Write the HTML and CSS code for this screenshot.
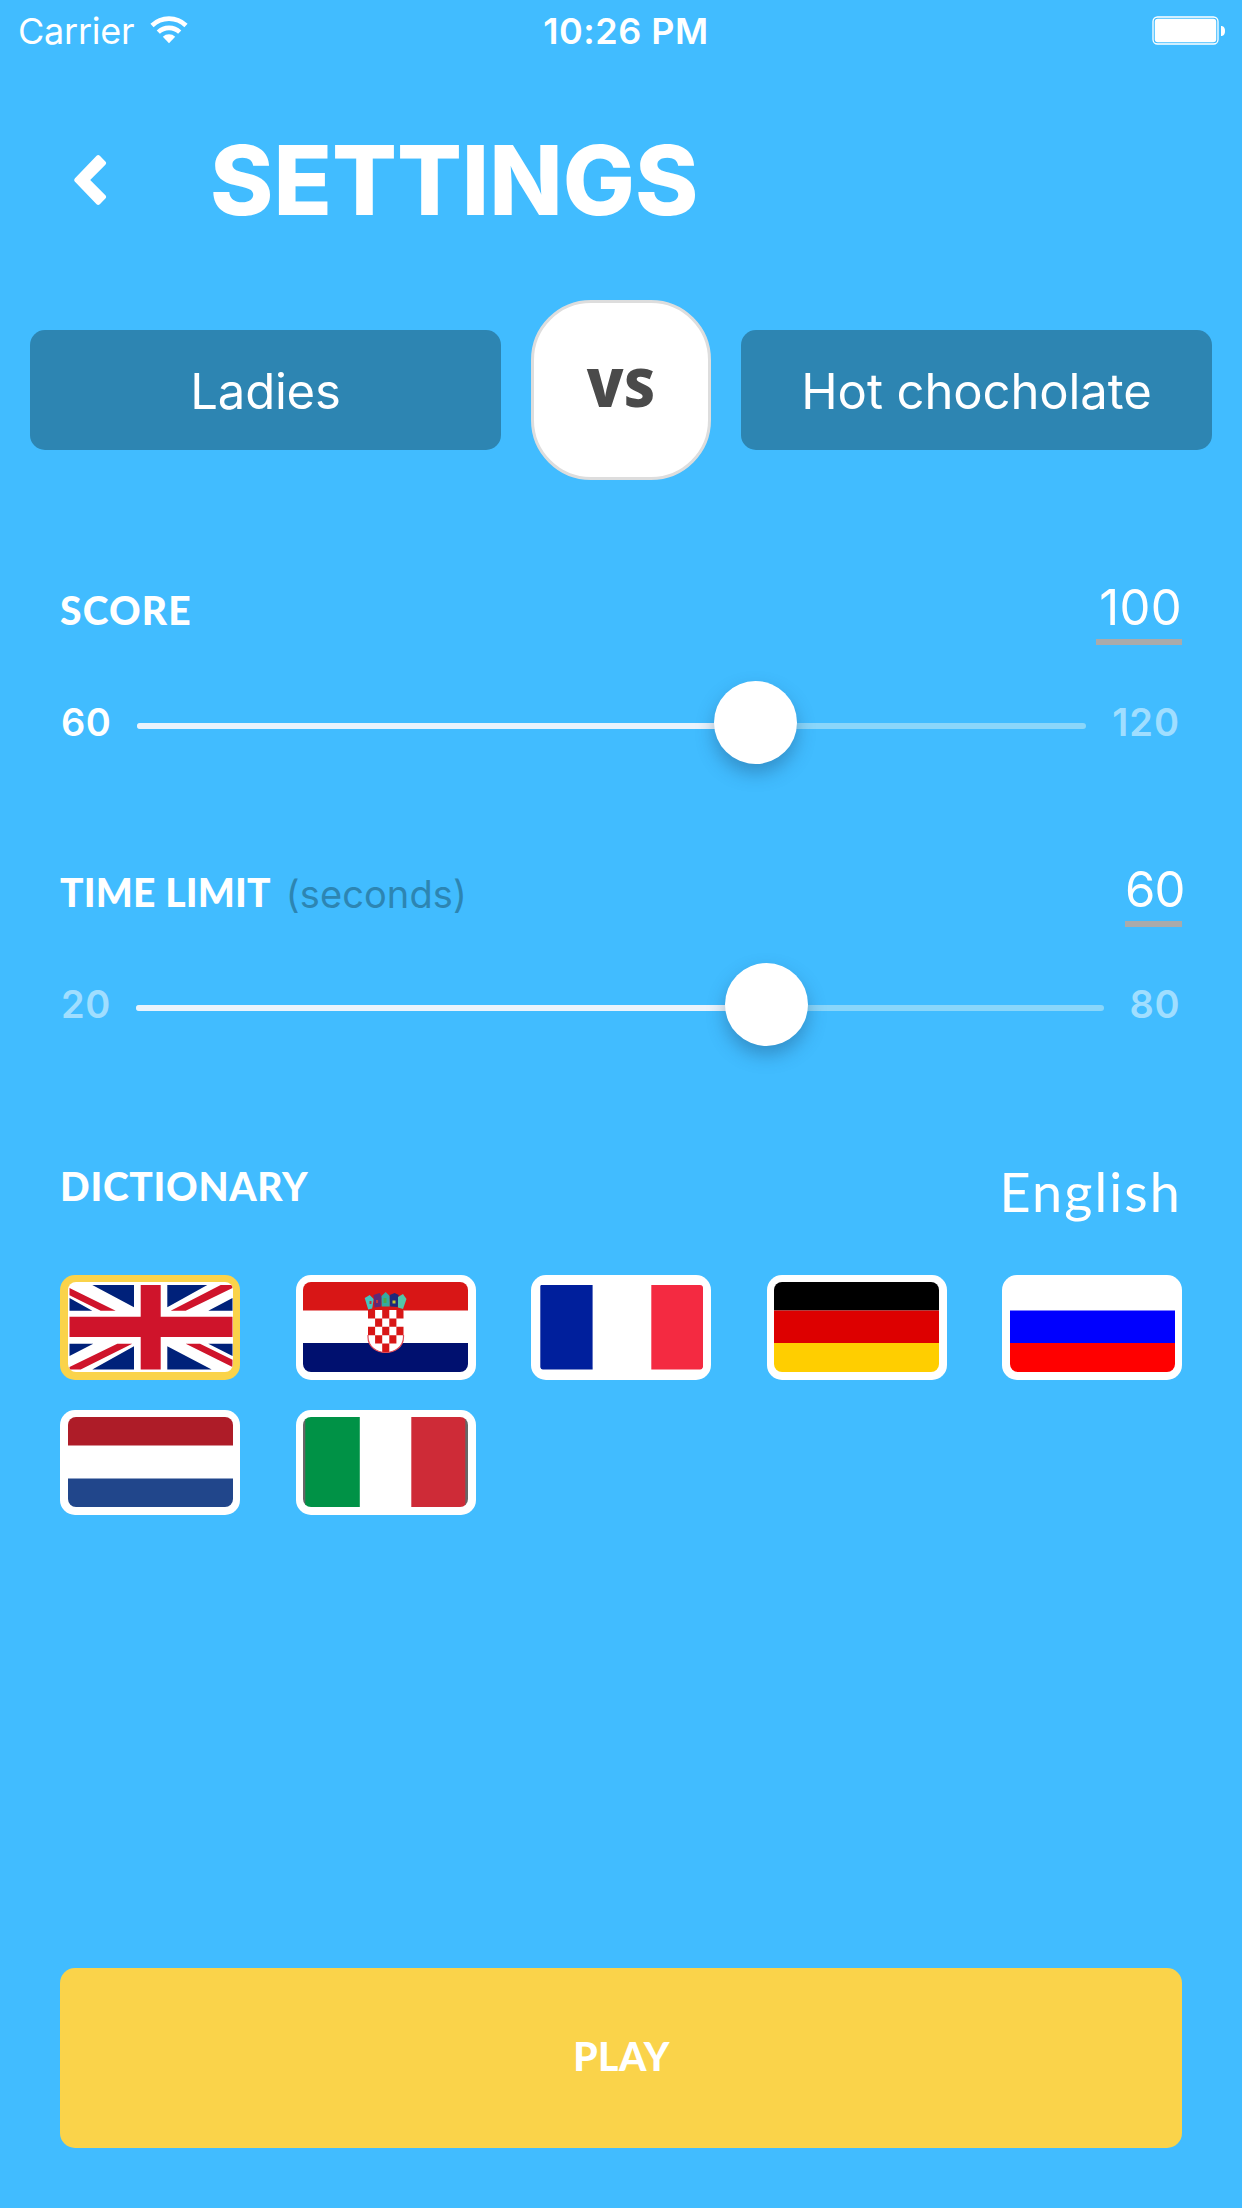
FILE: index.html
```html
<!DOCTYPE html>
<html lang="en">
<head>
<meta charset="utf-8">
<title>Settings</title>
<link rel="stylesheet" href="styles.css">
</head>
<body>
<main class="screen">
  <div class="status">
    <div class="status-left">
      <span class="carrier">Carrier</span>
      <svg class="wifi" width="38" height="28" viewBox="0 0 38 28">
        <path fill="none" stroke="#fff" stroke-width="4.600" d="M2 9.500a24.500 24.500 0 0 1 34 0M8.300 16.200a15.400 15.400 0 0 1 21.400 0"/>
        <path fill="#fff" d="M19 27.200l-6.200-6.400a9 9 0 0 1 12.400 0z"/>
      </svg>
    </div>
    <span class="clock">10:26 PM</span>
    <svg class="battery" width="75" height="30" viewBox="0 0 75 30">
      <rect x="1" y="1" width="65" height="27" rx="4.500" fill="none" stroke="#fff" stroke-width="1.300"/>
      <rect x="2.800" y="2.800" width="61.400" height="23.400" rx="3" fill="#fff"/>
      <path fill="#fff" d="M69 10c3 0 4 2.200 4 5s-1 5-4 5z"/>
    </svg>
  </div>

  <header class="header">
    <svg class="back" width="34" height="52" viewBox="0 0 34 52">
      <path fill="#fff" d="M22.600 1.700q1.600-1.600 3.200 0l5.600 5.800q1.500 1.600 0 3.200L16.200 26l15.200 15.300q1.500 1.600 0 3.200l-5.600 5.800q-1.600 1.600-3.200 0L1 27.800q-1.600-1.800 0-3.600z"/>
    </svg>
    <h1 class="title">SETTINGS</h1>
  </header>

  <section class="versus">
    <div class="team">Ladies</div>
    <div class="vs">VS</div>
    <div class="team team-b">Hot chocholate</div>
  </section>

  <section class="setting">
    <div class="setting-head">
      <h2 class="label label-score">SCORE</h2>
      <span class="value value-score">100</span>
    </div>
    <div class="slider slider-score">
      <span class="bound">60</span>
      <div class="track"><div class="fill" style="width: 65.2%"></div><div class="thumb" style="left: 65.2%"></div></div>
      <span class="bound bound-end dim bound-wide">120</span>
    </div>
  </section>

  <section class="setting">
    <div class="setting-head">
      <div class="label-group">
        <h2 class="label label-time">TIME LIMIT</h2>
        <span class="unit">(seconds)</span>
      </div>
      <span class="value value-time">60</span>
    </div>
    <div class="slider slider-time">
      <span class="bound dim">20</span>
      <div class="track"><div class="fill" style="width: 65.1%"></div><div class="thumb" style="left: 65.1%"></div></div>
      <span class="bound bound-end dim">80</span>
    </div>
  </section>

  <section class="dictionary">
    <div class="dictionary-head">
      <h2 class="label label-dictionary">DICTIONARY</h2>
      <span class="language">English</span>
    </div>
    <div class="flags">
      <div class="flag selected">
        <svg class="soft" viewBox="0 0 165 90">
          <path fill="#00217a" d="M24.300 3H66v22.300zM1.500 16l22.800 12.700H1.500zM99.300 3h40l-40 22.300zM164.500 16v12.700h-24.200zM66 64.300v23.200H24.300zM1.500 61.700h23.800L1.500 74zM99.300 64.300l44.400 23.200H99.300zM140.300 61.700h24.200V74z"/>
          <path fill="#cf142b" d="M1.500 6l46.200 22.700h-15L1.500 13.300zM152.700 3h11.800v3l-46.800 22.700h-15zM49.300 61.700h15L12.700 87.500H1.500V85zM117.700 61.700H132l32.500 16V85z"/>
          <path fill="#cf142b" d="M72.700 3h20v31.700h71.800V55H92.700v32.500h-20V55H1.500V34.700h71.200z"/>
        </svg>
      </div>
      <div class="flag">
        <svg viewBox="0 0 165 90">
          <path fill="#d81616" d="M0 0h165v28.600H0z"/>
          <path fill="#00106f" d="M0 61h165v29H0z"/>
          <g class="soft">
            <path fill="#fff" d="M65 28h35.500v27c0 10-9 15.500-17.700 15.500S65 65 65 55z"/>
            <path fill="#d81616" d="M65 28h7.100v8.400H65zM79.200 28h7.100v8.400h-7.100zM93.400 28h7.100v8.400h-7.100zM72.100 36.400h7.100v8.400h-7.100zM86.300 36.400h7.100v8.400h-7.100zM65 44.800h7.100v8.400H65zM79.200 44.800h7.100v8.400h-7.100zM93.400 44.800h7.100v8.400h-7.100zM72.100 53.200h7.100v8.400h-7.100zM86.300 53.200h7.100v8.400h-7.100zM79.200 61.600h7.100v8.900h-7.100z"/>
            <path fill="none" stroke="#e04a58" stroke-width="1.200" d="M65 53v2c0 10 9 15.500 17.700 15.500S100.500 65 100.500 55v-2"/>
            <path fill="#45c5bf" d="M61.700 16l5-3 4 4-1.500 9.500-4 1z"/>
            <path fill="#5d2a78" d="M70.500 13l6-2 2.500 4-1 9.500-6.500 1z"/>
            <path fill="#34a9a0" d="M78.500 14l4.200-4 4 4v10.500h-8z"/>
            <path fill="#1c2a7c" d="M86.700 13l5-2 4 2-1 12-7.500-.5z"/>
            <path fill="#54c6a8" d="M95 15l5-3 3.500 5-3.500 10-5-1.500z"/>
            <path fill="#c2363e" d="M66.500 19h2v3h-2zM73 18h2v3h-2z"/>
            <path fill="#49a84f" d="M80.500 16h3v5h-3z"/>
            <path fill="#c9c530" d="M89.500 18.500h3v3h-3z"/>
          </g>
        </svg>
      </div>
      <div class="flag">
        <svg class="soft" viewBox="0 0 165 90">
          <path fill="#001f9c" d="M1.300 3h52.300v84.500H4q-2.700 0-2.700-3z"/>
          <path fill="#f42a41" d="M112.300 3H161q3 0 3 3v78.500q0 3-3 3h-48.700z"/>
        </svg>
      </div>
      <div class="flag">
        <svg viewBox="0 0 165 90">
          <path fill="#000" d="M0 0h165v28.500H0z"/>
          <path fill="#d00" d="M0 28.500h165V61H0z"/>
          <path fill="#ffce00" d="M0 61h165v29H0z"/>
        </svg>
      </div>
      <div class="flag">
        <svg viewBox="0 0 165 90">
          <path fill="#00f" d="M0 28.500h165V61H0z"/>
          <path fill="#f00" d="M0 61h165v29H0z"/>
        </svg>
      </div>
      <div class="flag">
        <svg viewBox="0 0 165 90">
          <path fill="#ae1c28" d="M0 0h165v28.500H0z"/>
          <path fill="#21468b" d="M0 61.500h165V90H0z"/>
        </svg>
      </div>
      <div class="flag">
        <svg viewBox="0 0 165 90">
          <path fill="#666" d="M0 0h3v90H0zM162 0h3v90h-3z"/>
          <path fill="#009246" d="M2.300 0h54.500v90H2.300z"/>
          <path fill="#ce2b37" d="M108.300 0h54v90h-54z"/>
        </svg>
      </div>
    </div>
  </section>

  <button class="play">PLAY</button>
</main>
</body>
</html>
```
FILE: styles.css
```css
* {
  box-sizing: border-box;
}

body {
  margin: 0;
  background: #41bcff;
  color: #fff;
  font-family: Inter, "Liberation Sans", sans-serif;
}

.screen {
  display: flex;
  flex-direction: column;
  width: 1242px;
  height: 2208px;
  padding-bottom: 60px;
}

/* Status bar */
.status {
  display: grid;
  grid-template-columns: 1fr auto 1fr;
  align-items: center;
  height: 61px;
  padding: 0 15px 0 18px;
  font-size: 36px;
  line-height: 60px;
}

.status-left {
  display: flex;
  align-items: center;
  gap: 16px;
}

.carrier {
  padding-top: 1px;
  font-weight: 400;
  letter-spacing: -0.25px;
}

.wifi {
  margin-top: -1px;
}

.clock {
  padding: 1px 0 0 7px;
  font-weight: 600;
  letter-spacing: 0.5px;
}

.battery {
  justify-self: end;
}

/* Title row */
.header {
  display: flex;
  align-items: center;
  gap: 102px;
  height: 239px;
  padding: 0 0 2px 74px;
}

.title {
  margin: 0;
  font-size: 96px;
  font-weight: 800;
  line-height: 116px;
}

/* Teams */
.versus {
  display: flex;
  align-items: center;
  gap: 30px;
  padding: 0 30px;
}

.team {
  flex: 1;
  height: 120px;
  padding-top: 2px;
  border-radius: 15px;
  background: #2d85b2;
  font-size: 49px;
  font-weight: 400;
  line-height: 120px;
  letter-spacing: -0.2px;
  text-align: center;
}

.team-b {
  letter-spacing: -0.1px;
}

.vs {
  width: 180px;
  height: 180px;
  border: 3px solid #ddd;
  border-radius: 60px;
  background: #fff;
  color: #4a4a4a;
  font-family: "Open Sans", Lato, sans-serif;
  font-size: 53px;
  font-weight: 800;
  line-height: 168px;
  letter-spacing: 0.5px;
  text-align: center;
}

/* Sliders */
.setting {
  height: 188px;
  margin: 94px 60px 0;
}

.versus + .setting {
  margin-top: 96px;
}

.setting-head,
.dictionary-head {
  display: flex;
  align-items: flex-start;
  justify-content: space-between;
}

.setting-head {
  height: 69px;
}

.label-group {
  display: flex;
  gap: 15px;
}

.label {
  margin: 0;
  font-family: Lato, "Open Sans", sans-serif;
  font-size: 39px;
  font-weight: 900;
  line-height: 68px;
}

.label-score {
  letter-spacing: 1.2px;
}

.label-time {
  letter-spacing: 0.2px;
}

.label-dictionary {
  line-height: 72px;
  letter-spacing: 0.7px;
}

.unit {
  color: #2d85b2;
  font-size: 38px;
  line-height: 72px;
  letter-spacing: 0.1px;
}

.value {
  height: 69px;
  border-bottom: 6px solid #aaa;
  font-size: 49px;
  font-weight: 400;
  line-height: 64px;
  text-align: right;
}

.value-score {
  width: 86px;
  letter-spacing: 0.3px;
}

.value-time {
  width: 57px;
  padding-right: 1px;
  letter-spacing: -1px;
}

.slider {
  display: grid;
  align-items: center;
  height: 83px;
  margin-top: 36px;
}

.slider-score {
  grid-template-columns: 77px 1fr 96px;
}

.slider-time {
  grid-template-columns: 76px 1fr 78px;
}

.bound {
  padding-left: 1px;
  font-size: 38px;
  font-weight: 600;
  line-height: 81px;
  letter-spacing: 0.5px;
}

.bound-end {
  padding-right: 2px;
  text-align: right;
}

.bound-wide {
  letter-spacing: 1px;
}

.dim {
  color: #a0deff;
}

.track {
  position: relative;
  height: 6px;
  margin-top: 7px;
  border-radius: 3px;
  background: #8ad6fa;
}

.fill {
  height: 6px;
  border-radius: 3px;
  background: #eaf3fc;
}

.thumb {
  position: absolute;
  top: -42px;
  width: 83px;
  height: 83px;
  margin-left: -41.5px;
  border-radius: 50%;
  background: #fff;
  box-shadow: 0 9px 18px rgba(30, 70, 110, 0.38);
}

/* Dictionary */
.dictionary {
  margin: 104px 60px 0;
}

.dictionary-head {
  height: 83px;
}

.language {
  font-family: Lato, "Open Sans", sans-serif;
  font-size: 54px;
  line-height: 84px;
  letter-spacing: 2.1px;
}

.flags {
  display: grid;
  grid-template-columns: repeat(5, 180px);
  justify-content: space-between;
  row-gap: 30px;
  margin-top: 42px;
}

.flag {
  height: 105px;
  padding: 7px 7.5px 8px;
  border-radius: 15px;
  background: #fff;
}

.flag svg {
  display: block;
  width: 165px;
  height: 90px;
  border-radius: 8px;
}

.selected {
  background: #fad34a;
}

.selected svg {
  background: #fff;
}

.soft path {
  filter: blur(0.6px);
}

.play {
  height: 180px;
  margin: auto 60px 0;
  padding: 0 0 5px 1px;
  border: 0;
  border-radius: 15px;
  background: #fad34a;
  color: #fff;
  font-family: Lato, "Open Sans", sans-serif;
  font-size: 39px;
  font-weight: 900;
  letter-spacing: 0.4px;
}
```
